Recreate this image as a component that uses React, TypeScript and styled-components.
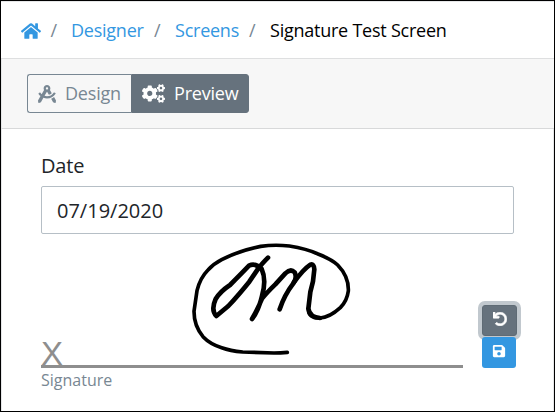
import React from 'react';
import styled, { createGlobalStyle } from 'styled-components';
import { FaHome, FaDraftingCompass, FaCogs, FaUndo, FaSave } from 'react-icons/fa';

const GlobalStyle = createGlobalStyle`
  *, *::before, *::after { box-sizing: border-box; }
  body { margin: 0; overflow: hidden; background: #fff; }
  button, input { font: inherit; margin: 0; }
`;

const Screen = styled.div`
  display: flex;
  flex-direction: column;
  width: 555px;
  height: 412px;
  border: 1px solid #000;
  background: #fff;
  color: #212529;
  font-family: 'Open Sans', sans-serif;
  font-size: 18px;
  font-weight: 300;
`;

const Breadcrumb = styled.nav`
  display: flex;
  align-items: center;
  height: 58px;
  padding: 1px 0 0 20px;
  border-top: 1px solid #e6e7e8;
  border-bottom: 1px solid #dedfe0;
  line-height: 27px;
  font-weight: 400;
  letter-spacing: -0.24px;
`;

const Crumb = styled.a<{ $width?: number }>`
  display: flex;
  width: ${(p) => (p.$width ? `${p.$width}px` : 'auto')};
  color: #3397e1;
  text-decoration: none;
`;

const Current = styled.span`
  color: #000;
`;

const Slash = styled.span<{ $before?: number; $after?: number }>`
  color: #788793;
  width: 7px;
  margin-left: ${(p) => p.$before ?? 10}px;
  margin-right: ${(p) => p.$after ?? 14}px;
`;

const Toolbar = styled.div`
  display: flex;
  height: 70px;
  padding: 15px 0 0 25px;
  background: #f7f7f7;
  border-left: 1px solid #e6e7e8;
  border-bottom: 1px solid #d8d9da;
`;

const ModeButton = styled.button<{ $active?: boolean; $width: number }>`
  display: flex;
  align-items: center;
  width: ${(p) => p.$width}px;
  height: 39px;
  padding: 0 0 0 10px;
  gap: 9px;
  line-height: 27px;
  font-weight: 400;
  letter-spacing: -0.2px;
  border: 1px solid ${(p) => (p.$active ? '#66727d' : '#788793')};
  border-right-width: ${(p) => (p.$active ? 1 : 0)}px;
  border-radius: ${(p) => (p.$active ? '0 3px 3px 0' : '3px 0 0 3px')};
  background: ${(p) => (p.$active ? '#66727d' : 'transparent')};
  color: ${(p) => (p.$active ? '#fff' : '#788793')};
`;

const Form = styled.main`
  display: flex;
  flex: 1;
  flex-direction: column;
  padding: 22px 39px 0;
  border: solid #e6e7e8;
  border-width: 0 1px;
`;

const Label = styled.label`
  height: 35px;
  font-size: 20px;
  font-weight: 400;
  letter-spacing: -0.2px;
  line-height: 30px;
`;

const DateInput = styled.input`
  width: 473px;
  height: 48px;
  padding: 0 15px;
  border: 1px solid #b6bfc6;
  border-radius: 2px;
  background: #fff;
  color: #212529;
  font-size: 20px;
  font-weight: 400;
  outline: none;
`;

const SignatureRow = styled.div`
  display: flex;
  height: 134px;
`;

const Pad = styled.div`
  display: flex;
  flex-shrink: 0;
  align-items: flex-end;
  width: 422px;
  height: 134px;
  border-bottom: 3px solid #8e8e8e;
`;

const Mark = styled.span`
  width: 151px;
  color: #8e8e8e;
  font-family: 'Liberation Sans', Arial, sans-serif;
  font-size: 33px;
  font-weight: 400;
  line-height: 33px;
  height: 28px;
`;

const Ink = styled.svg`
  width: 160px;
  height: 116px;
  flex-shrink: 0;
  margin-bottom: 7px;
  fill: none;
  stroke: #000;
  stroke-linecap: round;
  stroke-linejoin: round;
`;

const Actions = styled.div`
  display: flex;
  flex-direction: column;
  gap: 1px;
  padding: 71px 0 0 19px;
`;

const ActionButton = styled.button<{ $focused?: boolean }>`
  display: flex;
  flex-shrink: 0;
  align-items: center;
  justify-content: center;
  width: ${(p) => (p.$focused ? 35 : 34)}px;
  height: 31px;
  padding: 0 0 3px;
  border: ${(p) => (p.$focused ? '1px solid #5f6b75' : '0')};
  border-radius: 3px;
  background: ${(p) => (p.$focused ? '#66727d' : '#3397e1')};
  box-shadow: ${(p) => (p.$focused ? '0 0 0 4px #c1c8ce' : 'none')};
  color: #fff;
  position: relative;
`;

const Caption = styled.small`
  color: #788793;
  font-size: 16px;
  font-weight: 400;
  line-height: 24px;
`;

export default function App() {
  return (
    <>
      <GlobalStyle />
      <Screen>
        <Breadcrumb>
          <Crumb aria-label="Home"><FaHome size={20} /></Crumb>
          <Slash $before={9.5} $after={13.5}>/</Slash>
          <Crumb $width={73}>Designer</Crumb>
          <Slash>/</Slash>
          <Crumb $width={64}>Screens</Crumb>
          <Slash>/</Slash>
          <Current>Signature Test Screen</Current>
        </Breadcrumb>
        <Toolbar>
          <ModeButton $width={104}><FaDraftingCompass size={18} />Design</ModeButton>
          <ModeButton $active $width={118}><FaCogs size={23} />Preview</ModeButton>
        </Toolbar>
        <Form>
          <Label htmlFor="date">Date</Label>
          <DateInput id="date" defaultValue="07/19/2020" />
          <SignatureRow>
            <Pad>
              <Mark>X</Mark>
              <Ink viewBox="36 30 480 348">
                <path strokeWidth="11" d="M322 361 Q302 363 282 363 L188 360 Q150 356 125 347 Q90 336 69 314 Q42 282 42 238 L51 176 Q60 138 84 114 Q100 96 125 83 Q177 56 242 43 Q284 37 328 42 Q380 50 414 66 Q455 82 473 99 Q507 134 505 177 Q501 207 481 227 Q448 257 420 258 Q384 260 385 229" />
                <path strokeWidth="14" d="M264 77 Q244 97 233 112 L208 149 Q174 191 145 222 L109 252 Q92 234 107 201 Q120 179 150 159 Q184 125 207 101 Q226 92 245 111 Q260 144 246 192 Q235 238 216 261 Q234 230 246 200 Q260 182 286 157 L316 124 Q332 109 344 121 Q352 138 340 154 Q313 189 299 232" />
                <path strokeWidth="14" d="M341 152 Q370 112 391 98 Q402 94 403 112 Q401 149 391 180 L385 230 Q390 257 420 258" />
              </Ink>
            </Pad>
            <Actions>
              <ActionButton $focused aria-label="Undo"><FaUndo size={14} strokeWidth={24} /></ActionButton>
              <ActionButton aria-label="Save"><FaSave size={14} /></ActionButton>
            </Actions>
          </SignatureRow>
          <Caption>Signature</Caption>
        </Form>
      </Screen>
    </>
  );
}
